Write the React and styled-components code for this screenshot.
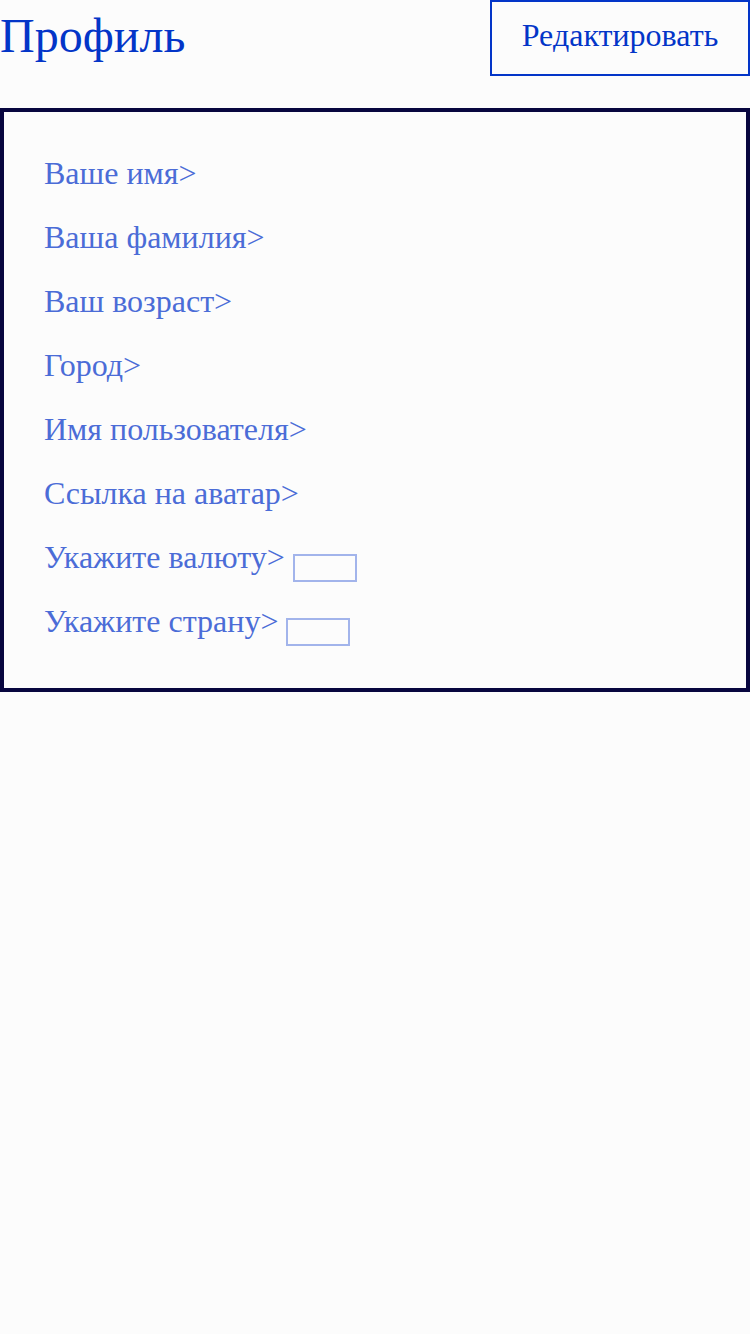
import React from "react";
import styled, { createGlobalStyle } from "styled-components";

const Global = createGlobalStyle`
  html, body { margin: 0; padding: 0; background: #fcfcfc; }
  body { font-family: "Liberation Serif", "Times New Roman", serif; }
`;

const Page = styled.div`
  width: 750px;
  min-height: 1334px;
  background: #fcfcfc;
`;

const Header = styled.header`
  display: flex;
  justify-content: space-between;
  align-items: flex-start;
  height: 108px;
`;

const Title = styled.h1`
  margin: 0;
  font-weight: normal;
  font-size: 48px;
  line-height: 72px;
  color: #0335c8;
`;

const EditButton = styled.button`
  box-sizing: border-box;
  width: 260px;
  height: 76px;
  background: transparent;
  border: 2px solid #0335c8;
  color: #0335c8;
  font-family: "Liberation Serif", "Times New Roman", serif;
  font-size: 32px;
  padding: 0 0 6px;
  cursor: pointer;
`;

const Card = styled.section`
  box-sizing: border-box;
  width: 750px;
  height: 584px;
  border: 4px solid #08063f;
  padding: 29px 40px 0;
`;

const Row = styled.div`
  height: 64px;
  line-height: 64px;
  font-size: 32px;
  color: #4b6cd7;
  white-space: nowrap;
`;

const Box = styled.span`
  display: inline-block;
  box-sizing: border-box;
  width: 64px;
  height: 28px;
  border: 2px solid #a2b4eb;
  vertical-align: -14px;
`;

const fields = [
  { label: "Ваше имя>" },
  { label: "Ваша фамилия>" },
  { label: "Ваш возраст>" },
  { label: "Город>" },
  { label: "Имя пользователя>" },
  { label: "Ссылка на аватар>" },
  { label: "Укажите валюту>", box: true },
  { label: "Укажите страну>", box: true },
];

export default function App() {
  return (
    <Page>
      <Global />
      <Header>
        <Title>Профиль</Title>
        <EditButton>Редактировать</EditButton>
      </Header>
      <Card>
        {fields.map((f) => (
          <Row key={f.label}>
            {f.label}
            {f.box && <> <Box /></>}
          </Row>
        ))}
      </Card>
    </Page>
  );
}
